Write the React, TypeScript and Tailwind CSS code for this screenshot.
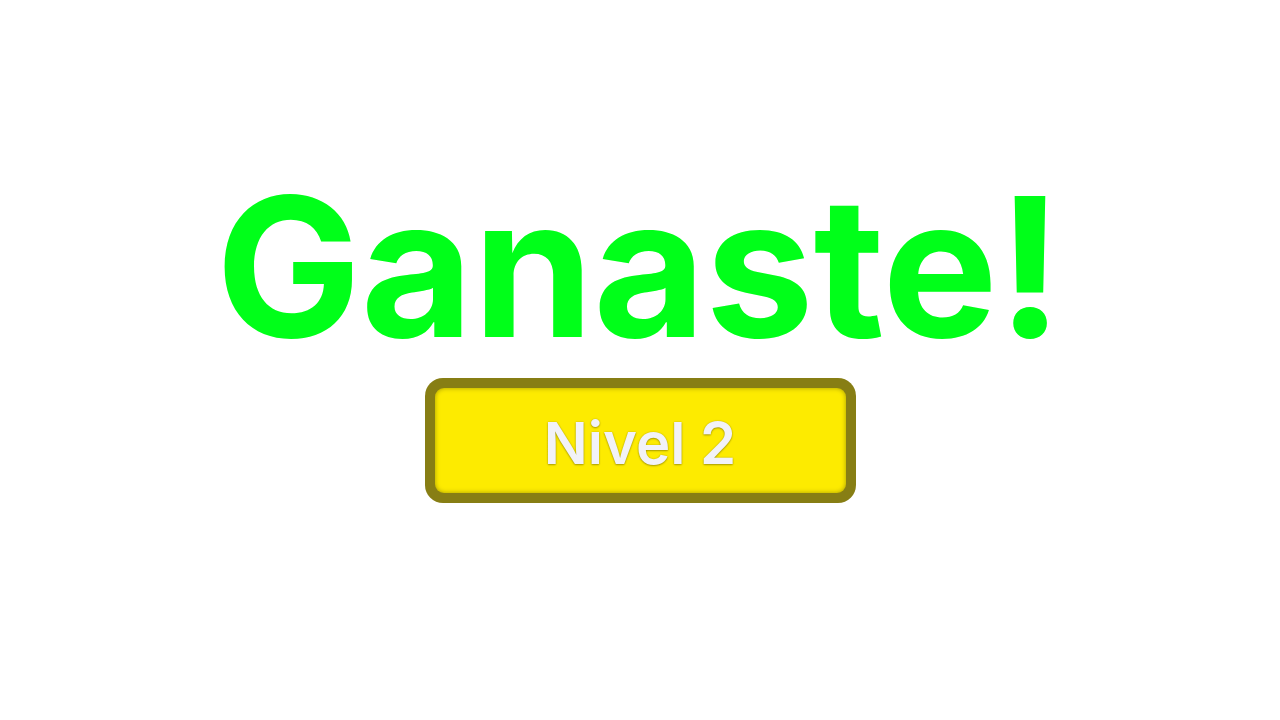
export default function App() {
  return (
    <div className="w-[1280px] h-[720px] bg-white flex flex-col items-center pt-[170px]" style={{ fontFamily: "Inter, 'Noto Sans', sans-serif" }}>
      <h1 className="text-[194px] leading-none font-bold text-[#00ff19] tracking-[-0.5px] h-[194px] ml-[-2px]">Ganaste!</h1>
      <div className="mt-[14px] w-[431px] h-[125px] rounded-[18px] bg-[#877e14] p-[10px]">
        <div className="w-full h-full rounded-[9px] bg-[#fdeb00] shadow-[inset_0_0_5px_rgba(0,0,0,0.35)] flex items-center justify-center">
          <span className="text-[58px] font-semibold text-[#f2f2f7] leading-none mt-[4px] [text-shadow:0_1px_2px_rgba(0,0,0,0.3),0_0_2px_rgba(0,0,0,0.2)]">Nivel 2</span>
        </div>
      </div>
    </div>
  );
}
